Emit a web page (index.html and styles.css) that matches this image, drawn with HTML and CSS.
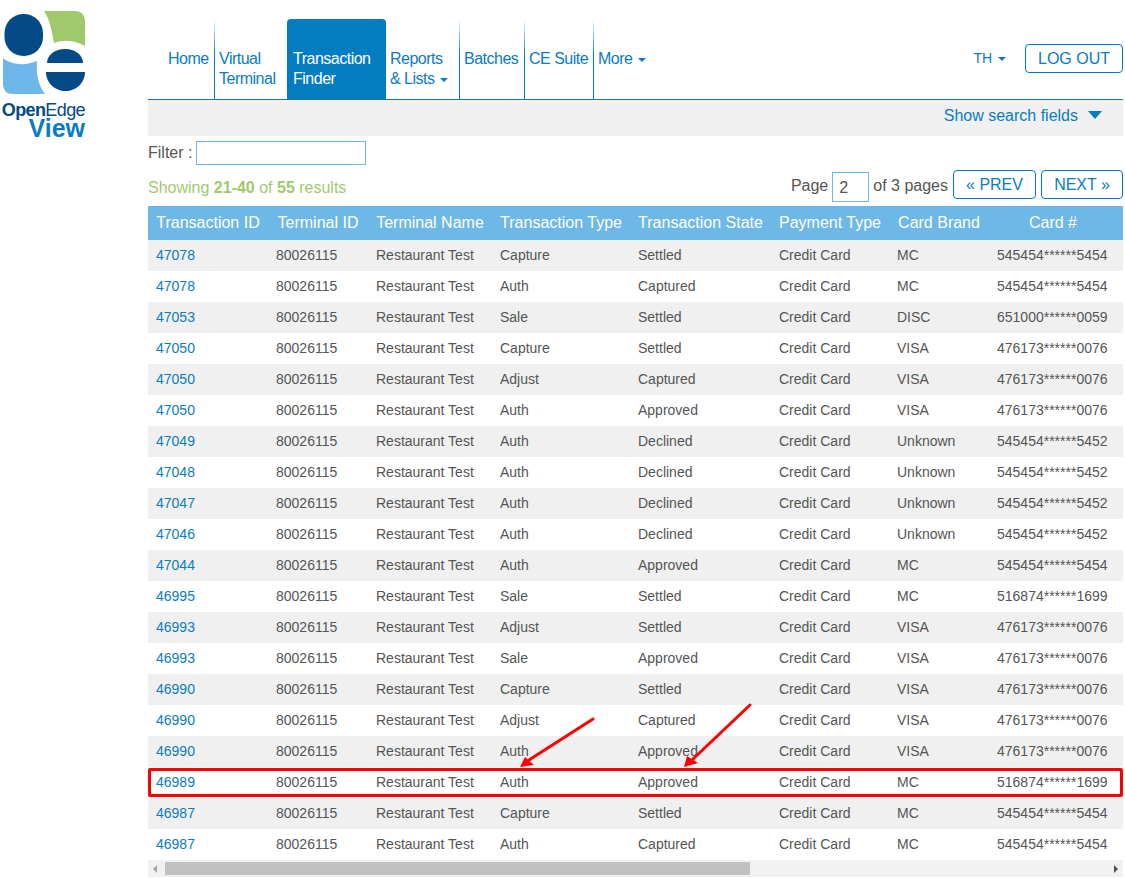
FILE: index.html
```html
<!DOCTYPE html>
<html lang="en">
<head>
<meta charset="utf-8">
<title>Transaction Finder</title>
<link rel="stylesheet" href="styles.css">
</head>
<body>
<div class="page">
  <aside class="sidebar">
    <svg class="logo-mark" viewBox="0 0 88 94" width="88" height="94" aria-hidden="true">
      <rect x="4.500" y="14" width="38.500" height="42" rx="19" fill="#034a86"/>
      <path d="M44 11H74Q85 11 85 22V46C76 41 65 39 54 43C52 32 50 20 44 11Z" fill="#9fc96b"/>
      <path d="M3 58C11 65 26 66 37 61C36 73 38 85 45 94H13Q3 94 3 84Z" fill="#6db8e8"/>
      <path d="M47 63C47 55 55 49 65 49C75 49 83 55 83 63Z" fill="#034a86"/>
      <path d="M46 72H85C85 83 76 91 65.500 91C55 91 46 83 46 72Z" fill="#034a86"/>
    </svg>
    <div class="logo-text">
      <div class="logo-name"><b>Open</b>Edge</div>
      <div class="logo-view">View</div>
    </div>
  </aside>
  <main class="main">
    <header class="topbar">
      <nav class="nav">
        <a class="nav-item nav-home">Home</a>
        <a class="nav-item nav-virtual">Virtual<br>Terminal</a>
        <a class="nav-item nav-active">Transaction<br>Finder</a>
        <a class="nav-item nav-reports">Reports<br>&amp; Lists <i class="caret"></i></a>
        <a class="nav-item nav-batches">Batches</a>
        <a class="nav-item nav-ce">CE Suite</a>
        <a class="nav-item nav-more">More <i class="caret"></i></a>
      </nav>
      <div class="user">
        <span class="user-name">TH <i class="caret"></i></span>
        <a class="btn btn-logout">LOG OUT</a>
      </div>
    </header>
    <div class="searchbar">
      <a class="search-toggle">Show search fields</a>
      <i class="caret-large"></i>
    </div>
    <div class="filter">
      <label class="filter-label">Filter :</label>
      <input class="filter-input" type="text">
    </div>
    <div class="pager-row">
      <div class="showing">Showing <b>21-40</b> of <b>55</b> results</div>
      <div class="pager">
        <span>Page</span>
        <input class="page-input" type="text" value="2">
        <span>of 3 pages</span>
        <a class="btn btn-prev">« PREV</a>
        <a class="btn btn-next">NEXT »</a>
      </div>
    </div>
    <div class="table-wrap">
      <table class="results">
        <colgroup>
          <col class="c1"><col class="c2"><col class="c3"><col class="c4"><col class="c5"><col class="c6"><col class="c7"><col class="c8"><col class="c9">
        </colgroup>
        <thead>
          <tr><th>Transaction ID</th><th>Terminal ID</th><th>Terminal Name</th><th>Transaction Type</th><th>Transaction State</th><th>Payment Type</th><th>Card Brand</th><th>Card #</th><th></th></tr>
        </thead>
        <tbody>
          <tr><td><a>47078</a></td><td>80026115</td><td>Restaurant Test</td><td>Capture</td><td>Settled</td><td>Credit Card</td><td>MC</td><td>545454******5454</td><td></td></tr>
          <tr><td><a>47078</a></td><td>80026115</td><td>Restaurant Test</td><td>Auth</td><td>Captured</td><td>Credit Card</td><td>MC</td><td>545454******5454</td><td></td></tr>
          <tr><td><a>47053</a></td><td>80026115</td><td>Restaurant Test</td><td>Sale</td><td>Settled</td><td>Credit Card</td><td>DISC</td><td>651000******0059</td><td></td></tr>
          <tr><td><a>47050</a></td><td>80026115</td><td>Restaurant Test</td><td>Capture</td><td>Settled</td><td>Credit Card</td><td>VISA</td><td>476173******0076</td><td></td></tr>
          <tr><td><a>47050</a></td><td>80026115</td><td>Restaurant Test</td><td>Adjust</td><td>Captured</td><td>Credit Card</td><td>VISA</td><td>476173******0076</td><td></td></tr>
          <tr><td><a>47050</a></td><td>80026115</td><td>Restaurant Test</td><td>Auth</td><td>Approved</td><td>Credit Card</td><td>VISA</td><td>476173******0076</td><td></td></tr>
          <tr><td><a>47049</a></td><td>80026115</td><td>Restaurant Test</td><td>Auth</td><td>Declined</td><td>Credit Card</td><td>Unknown</td><td>545454******5452</td><td></td></tr>
          <tr><td><a>47048</a></td><td>80026115</td><td>Restaurant Test</td><td>Auth</td><td>Declined</td><td>Credit Card</td><td>Unknown</td><td>545454******5452</td><td></td></tr>
          <tr><td><a>47047</a></td><td>80026115</td><td>Restaurant Test</td><td>Auth</td><td>Declined</td><td>Credit Card</td><td>Unknown</td><td>545454******5452</td><td></td></tr>
          <tr><td><a>47046</a></td><td>80026115</td><td>Restaurant Test</td><td>Auth</td><td>Declined</td><td>Credit Card</td><td>Unknown</td><td>545454******5452</td><td></td></tr>
          <tr><td><a>47044</a></td><td>80026115</td><td>Restaurant Test</td><td>Auth</td><td>Approved</td><td>Credit Card</td><td>MC</td><td>545454******5454</td><td></td></tr>
          <tr><td><a>46995</a></td><td>80026115</td><td>Restaurant Test</td><td>Sale</td><td>Settled</td><td>Credit Card</td><td>MC</td><td>516874******1699</td><td></td></tr>
          <tr><td><a>46993</a></td><td>80026115</td><td>Restaurant Test</td><td>Adjust</td><td>Settled</td><td>Credit Card</td><td>VISA</td><td>476173******0076</td><td></td></tr>
          <tr><td><a>46993</a></td><td>80026115</td><td>Restaurant Test</td><td>Sale</td><td>Approved</td><td>Credit Card</td><td>VISA</td><td>476173******0076</td><td></td></tr>
          <tr><td><a>46990</a></td><td>80026115</td><td>Restaurant Test</td><td>Capture</td><td>Settled</td><td>Credit Card</td><td>VISA</td><td>476173******0076</td><td></td></tr>
          <tr><td><a>46990</a></td><td>80026115</td><td>Restaurant Test</td><td>Adjust</td><td>Captured</td><td>Credit Card</td><td>VISA</td><td>476173******0076</td><td></td></tr>
          <tr><td><a>46990</a></td><td>80026115</td><td>Restaurant Test</td><td>Auth</td><td>Approved</td><td>Credit Card</td><td>VISA</td><td>476173******0076</td><td></td></tr>
          <tr><td><a>46989</a></td><td>80026115</td><td>Restaurant Test</td><td>Auth</td><td>Approved</td><td>Credit Card</td><td>MC</td><td>516874******1699</td><td></td></tr>
          <tr><td><a>46987</a></td><td>80026115</td><td>Restaurant Test</td><td>Capture</td><td>Settled</td><td>Credit Card</td><td>MC</td><td>545454******5454</td><td></td></tr>
          <tr><td><a>46987</a></td><td>80026115</td><td>Restaurant Test</td><td>Auth</td><td>Captured</td><td>Credit Card</td><td>MC</td><td>545454******5454</td><td></td></tr>
        </tbody>
      </table>
      <div class="highlight"></div>
      <svg class="arrows" viewBox="0 0 975 160" width="975" height="160" aria-hidden="true">
        <g fill="none" stroke="#ff0000" stroke-width="3" stroke-linecap="round">
          <line x1="445" y1="14" x2="381" y2="55"/>
          <line x1="602" y1="0" x2="545" y2="54"/>
        </g>
        <path d="M372 62L377 52L386 60Z" fill="#ff0000"/>
        <path d="M536 62L539 51L550 58Z" fill="#ff0000"/>
      </svg>
    </div>
    <div class="scrollbar">
      <i class="arrow-left"></i>
      <div class="thumb"></div>
      <i class="arrow-right"></i>
    </div>
  </main>
</div>
</body>
</html>
```

FILE: styles.css
```css
* { box-sizing: border-box; }
html, body { margin: 0; padding: 0; background: #fff; }
body {
  font-family: "Liberation Sans", Arial, sans-serif;
  font-size: 16px;
  line-height: 20px;
  color: #555;
  overflow: hidden;
}
a { color: #0a7cc1; text-decoration: none; }

.page { display: flex; width: 1125px; height: 878px; }

/* sidebar / logo */
.sidebar { width: 148px; flex: none; }
.logo-mark { display: block; margin-bottom: 8px; overflow: visible; }
.logo-text { width: 85px; text-align: right; }
.logo-name { font-size: 18px; line-height: 16px; color: #034a86; letter-spacing: -0.6px; white-space: nowrap; }
.logo-view { font-size: 25px; line-height: 21px; font-weight: 700; color: #0a7cc1; }

/* main column */
.main { width: 975px; flex: none; }

.topbar {
  display: flex;
  justify-content: space-between;
  height: 100px;
  padding-top: 19px;
  border-bottom: 1px solid #1e6fa8;
}
.nav { display: flex; align-items: stretch; }
.nav-item {
  display: block;
  padding: 30px 4px 0;
  font-size: 16px;
  letter-spacing: -0.5px;
  color: #0a7cc1;
  white-space: nowrap;
  border-right: 1px solid transparent;
  border-image: linear-gradient(to bottom, #fff 0, #037cc2 45%, #037cc2 100%) 1;
}
.nav-home { width: 67px; padding-left: 20px; }
.nav-virtual { width: 72px; border-right: 0; border-image: none; }
.nav-active {
  width: 99px;
  padding-left: 6px;
  background: #037cc2;
  color: #fff;
  border-radius: 4px 4px 0 0;
  border-right: 0;
  border-image: none;
}
.nav-reports { width: 74px; }
.nav-batches { width: 65px; }
.nav-ce { width: 69px; }
.nav-more { border-right: 0; border-image: none; }

.caret {
  display: inline-block;
  width: 0;
  height: 0;
  margin-left: 2px;
  vertical-align: middle;
  border-top: 4px solid currentColor;
  border-left: 4px solid transparent;
  border-right: 4px solid transparent;
}

.user { display: flex; align-items: flex-start; padding-top: 25px; }
.user-name { font-size: 14px; line-height: 29px; color: #0a7cc1; margin-right: 19px; }

.btn {
  display: block;
  height: 29px;
  line-height: 28px;
  text-align: center;
  color: #0a7cc1;
  border: 1px solid #037cc2;
  border-radius: 4px;
  background: #fff;
}
.btn-logout { width: 98px; }
.btn-prev { width: 83px; margin-left: 5px; }
.btn-next { width: 82px; margin-left: 5px; }

.searchbar {
  display: flex;
  justify-content: flex-end;
  align-items: center;
  height: 36px;
  padding-right: 21px;
  padding-bottom: 5px;
  background: #f0f0f0;
}
.search-toggle { color: #0a7cc1; }
.caret-large {
  width: 0;
  height: 0;
  margin-left: 10px;
  margin-bottom: 1px;
  border-top: 8px solid #037cc2;
  border-left: 7px solid transparent;
  border-right: 7px solid transparent;
}

.filter { display: flex; align-items: center; height: 34px; }
.filter-label { margin-right: 4px; margin-bottom: 1px; }
.filter-input {
  width: 170px;
  height: 24px;
  border: 1px solid #6db8e8;
  background: #fff;
  padding: 0;
}

.pager-row { display: flex; justify-content: space-between; height: 36px; }
.showing { color: #a3c96d; padding-top: 8px; }
.showing b { font-weight: 700; }
.pager { display: flex; align-items: flex-start; }
.pager span { padding-top: 6px; }
.page-input {
  width: 37px;
  height: 30px;
  margin: 2px 4px 0 4px;
  padding: 1px 0 0 6px;
  border: 1px solid #6db8e8;
  font: 16px "Liberation Sans", Arial, sans-serif;
  color: #555;
  background: #fff;
}

.table-wrap { position: relative; width: 975px; height: 654px; overflow: hidden; }
.results { width: 975px; table-layout: fixed; border-collapse: collapse; }
.c1 { width: 120px; }
.c2 { width: 100px; }
.c3 { width: 124px; }
.c4 { width: 138px; }
.c5 { width: 141px; }
.c6 { width: 118px; }
.c7 { width: 100px; }
.c8 { width: 128px; }
.c9 { width: 6px; }
.results th {
  height: 34px;
  padding: 0;
  background: #6db8e6;
  color: #fff;
  font-weight: 400;
  font-size: 16px;
  text-align: center;
  white-space: nowrap;
}
.results td {
  height: 31px;
  padding: 0 8px 2px;
  font-size: 14px;
  white-space: nowrap;
  overflow: hidden;
}
.results tbody tr:nth-child(odd) { background: #f0f0f0; }

.highlight {
  position: absolute;
  left: 0;
  top: 562px;
  width: 975px;
  height: 29px;
  border: 3px solid #ff0000;
  border-radius: 2px;
}
.arrows { position: absolute; left: 0; top: 499px; overflow: visible; }

.scrollbar {
  display: flex;
  align-items: center;
  height: 17px;
  background: #f1f1f1;
}
.arrow-left {
  width: 0; height: 0;
  margin-left: 5px;
  border-top: 4px solid transparent;
  border-bottom: 4px solid transparent;
  border-right: 4px solid #a3a3a3;
}
.thumb { width: 585px; height: 13px; margin-left: 8px; background: #c1c1c1; }
.arrow-right {
  width: 0; height: 0;
  margin-left: auto;
  margin-right: 5px;
  border-top: 4px solid transparent;
  border-bottom: 4px solid transparent;
  border-left: 4px solid #505050;
}
```
